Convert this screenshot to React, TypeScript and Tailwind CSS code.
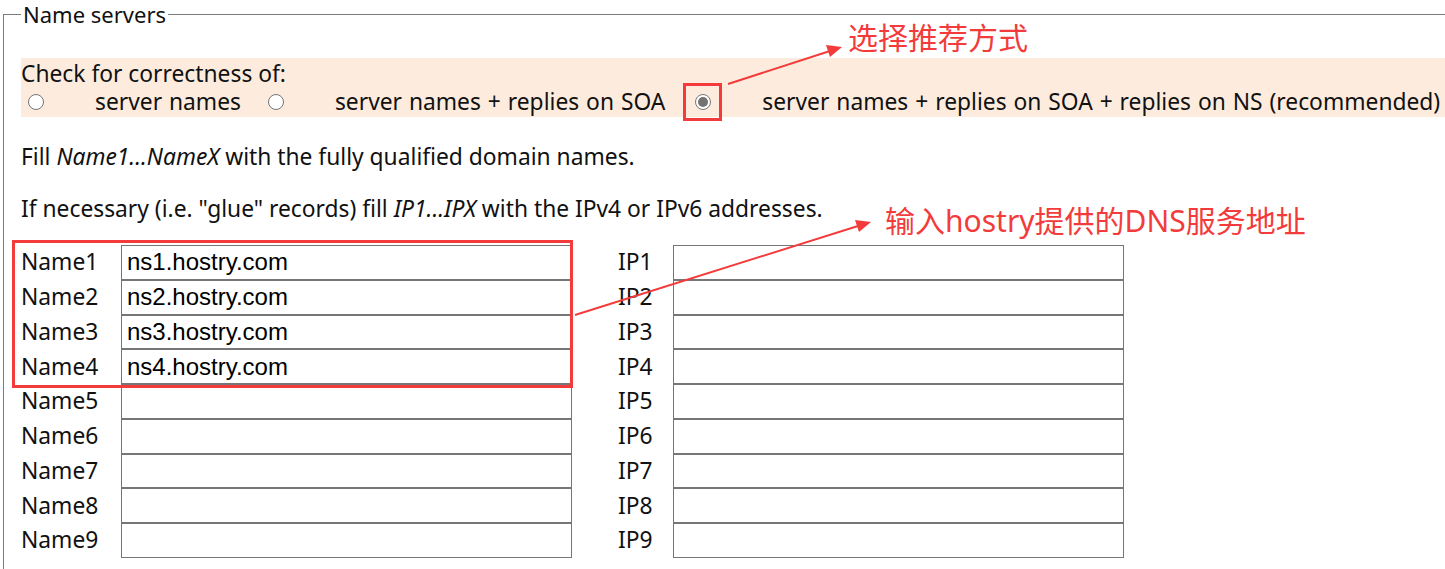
import React from "react";

const font = { fontFamily: '"Noto Sans", "Open Sans", sans-serif' };

function Radio({ checked }: { checked?: boolean }) {
  return (
    <span className="flex h-[16px] w-[16px] min-w-[16px] items-center justify-center rounded-full border border-[#767676] bg-white">
      {checked && <span className="block h-[10px] w-[10px] rounded-full bg-[#737373]" />}
    </span>
  );
}

const rows = [1, 2, 3, 4, 5, 6, 7, 8, 9];
const names: Record<number, string> = {
  1: "ns1.hostry.com",
  2: "ns2.hostry.com",
  3: "ns3.hostry.com",
  4: "ns4.hostry.com",
};

export default function App() {
  return (
    <div className="relative h-[569px] w-full overflow-hidden bg-white text-[22.8px] text-[#111]" style={font}>
      <fieldset className="ml-[3px] w-[1500px] border border-[#7a7a7a] pl-[17px] pb-[20px]">
        <legend className="px-[2px] text-[22px] leading-[28px]">Name servers</legend>

        {/* correctness options */}
        <div className="mt-[30px] bg-[#fdecde] pt-[2px] pb-[1px]">
          <div className="h-[28px] leading-[28px]">Check for correctness of:</div>
          <div className="flex h-[28px] items-center leading-[28px] [word-spacing:1px]">
            <span className="ml-[7px]"><Radio /></span>
            <span className="ml-[51px]">server names</span>
            <span className="ml-[27px]"><Radio /></span>
            <span className="ml-[51px]">server names + replies on SOA</span>
            <span className="ml-[30px]"><Radio checked /></span>
            <span className="ml-[51px]">server names + replies on SOA + replies on NS (recommended)</span>
          </div>
        </div>

        <p className="mt-[26px] leading-[28px]">
          Fill <i>Name1...NameX</i> with the fully qualified domain names.
        </p>
        <p className="mt-[24px] leading-[28px]">
          If necessary (i.e. "glue" records) fill <i>IP1...IPX</i> with the IPv4 or IPv6 addresses.
        </p>

        <div className="mt-[22px] grid grid-cols-[100px_451px_46px_55px_451px]">
          {rows.map((n) => (
            <React.Fragment key={n}>
              <div className="flex h-[34.75px] items-center">Name{n}</div>
              <input
                readOnly
                value={names[n] ?? ""}
                className="h-[34.75px] border border-[#767676] bg-white pl-[5px] text-[24px] text-black outline-none"
                style={{ fontFamily: '"Liberation Sans", Arial, sans-serif' }}
              />
              <div />
              <div className="flex h-[34.75px] items-center">IP{n}</div>
              <input
                readOnly
                value=""
                className="h-[34.75px] border border-[#767676] bg-white pl-[5px] outline-none"
              />
            </React.Fragment>
          ))}
        </div>
      </fieldset>

      {/* annotation: recommended option */}
      <div className="pointer-events-none absolute left-[683px] top-[83px] h-[38px] w-[39px] border-[3px] border-[#f33b3b]" />
      <div className="pointer-events-none absolute left-[848px] top-[16px] text-[30px] leading-[40px] text-[#f33b3b]" style={{ fontFamily: '"Noto Sans CJK SC", "Noto Sans", sans-serif' }}>
        选择推荐方式
      </div>

      {/* annotation: name server box */}
      <div className="pointer-events-none absolute left-[12px] top-[240px] h-[148px] w-[561px] border-[3px] border-[#f33b3b]" />
      <div className="pointer-events-none absolute left-[885px] top-[201px] text-[30px] leading-[40px] text-[#f33b3b]" style={{ fontFamily: '"Noto Sans", "Noto Sans CJK SC", sans-serif' }}>
        输入hostry提供的DNS服务地址
      </div>

      <svg className="pointer-events-none absolute left-0 top-0" width="1445" height="569">
        <line x1="728" y1="84" x2="830" y2="51" stroke="#f33b3b" strokeWidth="2" />
        <polygon points="842,47 826,45 830,57" fill="#f33b3b" />
        <line x1="575" y1="315" x2="858" y2="226" stroke="#f33b3b" strokeWidth="2" />
        <polygon points="871,222 855,220 859,232" fill="#f33b3b" />
      </svg>
    </div>
  );
}
